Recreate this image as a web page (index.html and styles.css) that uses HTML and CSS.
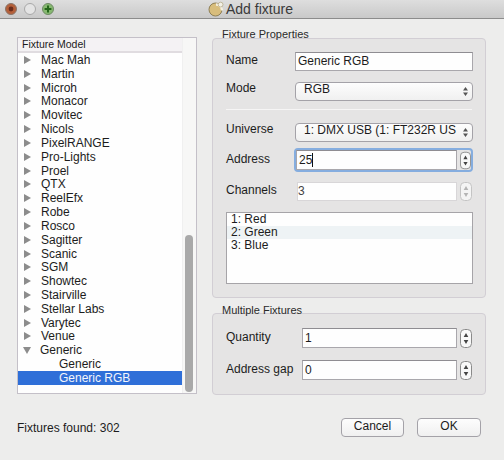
FILE: index.html
```html
<!DOCTYPE html>
<html>
<head>
<meta charset="utf-8">
<title>Add fixture</title>
<link rel="stylesheet" href="styles.css">
</head>
<body>
<div class="window">
  <header class="titlebar">
    <div class="lights">
      <svg class="light" viewBox="0 0 12 12"><circle cx="6" cy="6" r="5.5" fill="#b5603a" stroke="#8a7468"/><circle cx="6" cy="6" r="2.4" fill="#6b2d1c"/></svg>
      <svg class="light" viewBox="0 0 12 12"><circle cx="6" cy="6" r="5.5" fill="#e4e4e4" stroke="#a8a8a8"/></svg>
      <svg class="light" viewBox="0 0 12 12"><circle cx="6" cy="6" r="5.5" fill="#86b870" stroke="#6f8a66"/><path d="M6 2.600v6.800M2.600 6h6.800" stroke="#24661a" stroke-width="2"/></svg>
    </div>
    <div class="title">
      <svg class="title-icon" viewBox="0 0 16 16"><circle cx="7.500" cy="8.500" r="6.500" fill="#d8bd7c" stroke="#8f8056"/><path d="M8 3.500a6 6 0 0 1 6 6" fill="none" stroke="#f4efe0" stroke-width="2.400"/><circle cx="12.600" cy="3.600" r="2.400" fill="#f2f0e6" stroke="#a89a70" stroke-width=".6"/></svg>
      <span>Add fixture</span>
    </div>
  </header>

  <main class="main">
    <section class="tree">
      <div class="tree-head">Fixture Model</div>
      <div class="tree-body">
        <ul class="rows">
          <li class="row"><i class="tri"></i>Mac Mah</li>
          <li class="row"><i class="tri"></i>Martin</li>
          <li class="row"><i class="tri"></i>Microh</li>
          <li class="row"><i class="tri"></i>Monacor</li>
          <li class="row"><i class="tri"></i>Movitec</li>
          <li class="row"><i class="tri"></i>Nicols</li>
          <li class="row"><i class="tri"></i>PixelRANGE</li>
          <li class="row"><i class="tri"></i>Pro-Lights</li>
          <li class="row"><i class="tri"></i>Proel</li>
          <li class="row"><i class="tri"></i>QTX</li>
          <li class="row"><i class="tri"></i>ReelEfx</li>
          <li class="row"><i class="tri"></i>Robe</li>
          <li class="row"><i class="tri"></i>Rosco</li>
          <li class="row"><i class="tri"></i>Sagitter</li>
          <li class="row"><i class="tri"></i>Scanic</li>
          <li class="row"><i class="tri"></i>SGM</li>
          <li class="row"><i class="tri"></i>Showtec</li>
          <li class="row"><i class="tri"></i>Stairville</li>
          <li class="row"><i class="tri"></i>Stellar Labs</li>
          <li class="row"><i class="tri"></i>Varytec</li>
          <li class="row"><i class="tri"></i>Venue</li>
          <li class="row"><i class="tri open"></i>Generic</li>
          <li class="row child">Generic</li>
          <li class="row child selected">Generic RGB</li>
        </ul>
        <div class="scrollbar"><div class="thumb"></div></div>
      </div>
    </section>

    <div class="side">
      <section class="group props">
        <div class="legend">Fixture Properties</div>
        <div class="line name-line"><label class="label">Name</label><div class="input wide">Generic RGB</div></div>
        <div class="line mode-line"><label class="label up">Mode</label><div class="select"><span>RGB</span><svg class="updown" viewBox="0 0 7 11"><path d="M3.500 1 6 4.400H1zM3.500 10 1 6.600h5z" fill="#555"/></svg></div></div>
        <hr class="sep">
        <div class="line"><label class="label up">Universe</label><div class="select"><span>1: DMX USB (1: FT232R US</span><svg class="updown" viewBox="0 0 7 11"><path d="M3.500 1 6 4.400H1zM3.500 10 1 6.600h5z" fill="#555"/></svg></div></div>
        <div class="line addr-line"><label class="label addr-label">Address</label>
          <div class="focus-ring">
            <div class="input addr">25<span class="caret"></span></div>
            <svg class="spin" viewBox="0 0 12 19"><rect x=".5" y=".5" width="11" height="18" rx="4" fill="#f8f8f8" stroke="#8a8a8a"/><path d="M6 4 8.300 8H3.700zM6 15 3.700 11h4.600z" fill="#444"/></svg>
          </div>
        </div>
        <div class="line chan-line"><label class="label">Channels</label>
          <div class="input disabled">3</div>
          <svg class="spin" viewBox="0 0 12 19"><rect x=".5" y=".5" width="11" height="18" rx="4" fill="#f4f4f4" stroke="#c4c4c4"/><path d="M6 4 8.300 8H3.700zM6 15 3.700 11h4.600z" fill="#b4b4b4"/></svg>
        </div>
        <ul class="channels">
          <li class="chan">1: Red</li>
          <li class="chan alt">2: Green</li>
          <li class="chan">3: Blue</li>
        </ul>
      </section>

      <section class="group multi">
        <div class="legend">Multiple Fixtures</div>
        <div class="line qty-line"><label class="label short">Quantity</label>
          <div class="input num">1</div>
          <svg class="spin" viewBox="0 0 12 19"><rect x=".5" y=".5" width="11" height="18" rx="4" fill="#f8f8f8" stroke="#8a8a8a"/><path d="M6 4 8.300 8H3.700zM6 15 3.700 11h4.600z" fill="#444"/></svg>
        </div>
        <div class="line gap-line"><label class="label short">Address gap</label>
          <div class="input num">0</div>
          <svg class="spin" viewBox="0 0 12 19"><rect x=".5" y=".5" width="11" height="18" rx="4" fill="#f8f8f8" stroke="#8a8a8a"/><path d="M6 4 8.300 8H3.700zM6 15 3.700 11h4.600z" fill="#444"/></svg>
        </div>
      </section>
    </div>
  </main>

  <footer class="footer">
    <span class="found">Fixtures found: 302</span>
    <div class="buttons">
      <button class="btn">Cancel</button>
      <button class="btn">OK</button>
    </div>
  </footer>
</div>
</body>
</html>
```
FILE: styles.css
```css
* { box-sizing: border-box; }
html, body { margin: 0; padding: 0; }
body {
  width: 504px;
  height: 460px;
  overflow: hidden;
  background: #ededec;
  color: #1c1c1c;
  font: 12px "Liberation Sans", Arial, sans-serif;
}
.window { display: flex; flex-direction: column; height: 460px; }

.titlebar {
  height: 19px;
  flex: none;
  display: flex;
  align-items: center;
  background: linear-gradient(#dedede, #c9c9c9);
  border-bottom: 1px solid #8c8c8c;
  padding-left: 5px;
}
.lights { display: flex; gap: 6.5px; width: 203px; }
.light { width: 12px; height: 12px; display: block; }
.title { display: flex; align-items: center; gap: 2px; font-size: 14px; color: #3a3a3a; }
.title-icon { width: 16px; height: 16px; display: block; }

.main { display: flex; gap: 15px; padding: 18px 0 0 17px; flex: none; }

.tree {
  width: 180px;
  height: 357px;
  background: #fefefe;
  border: 1px solid #c4c0c8;
  display: flex;
  flex-direction: column;
}
.tree-head {
  height: 15px;
  flex: none;
  padding-left: 4px;
  font-size: 10.500px;
  line-height: 13px;
  background: #f4f2f4;
  border-bottom: 2px solid #e0dce0;
  margin-right: 14px;
}
.tree-body { flex: 1; display: flex; min-height: 0; }
.rows { list-style: none; margin: 0; padding: 0; width: 165px; }
.row {
  height: 13.83px;
  line-height: 14px;
  padding-left: 6px;
  display: flex;
  align-items: center;
}
.tri {
  width: 0;
  height: 0;
  flex: none;
  margin: 0 10px 0 0;
  border-left: 7px solid #8c8c8c;
  border-top: 4px solid transparent;
  border-bottom: 4px solid transparent;
}
.tri.open {
  border-left: 4px solid transparent;
  border-right: 4px solid transparent;
  border-top: 7px solid #8c8c8c;
  border-bottom: 0;
  margin: 0 9px 0 -1px;
}
.row.child { padding-left: 41px; }
.row.selected { background: #2f6fd8; color: #f4f6fb; }
.scrollbar { flex: 1; background: #f7f7f6; padding: 0 3px 0 2px; margin-top: -15px; border-left: 1px solid #f0f0f0; }
.thumb { height: 157px; margin-top: 197px; width: 8px; background: #a9a9a9; border-radius: 4px; }

.side { width: 274px; display: flex; flex-direction: column; gap: 15px; margin-top: 1px; }
.group {
  width: 274px;
  background: #e5e4e4;
  border: 1px solid #d2ced4;
  border-radius: 4px;
  padding-left: 13px;
  position: relative;
}
.legend {
  position: absolute;
  left: 9px;
  top: -11px;
  font-size: 11px;
  line-height: 12px;
  color: #2a2a2a;
}
.multi .legend { top: -10px; }
.props { height: 260px; }
.multi { height: 82px; }

.line { display: flex; align-items: center; width: 247px; }
.label { width: 69px; flex: none; line-height: 13px; padding-bottom: 2px; }
.label.up { padding-bottom: 6px; }
.label.short { width: 76px; }
.input {
  height: 19px;
  background: #fefefe;
  border: 1px solid #a9a7ac;
  border-top-color: #8f8d92;
  padding-left: 2px;
  line-height: 16px;
  font-size: 12px;
}
.wide { width: 178px; }
.select {
  width: 178px;
  height: 19px;
  background: linear-gradient(#fdfdfd, #f0f0f0);
  border: 1px solid #a4a2a8;
  border-radius: 4px;
  padding: 0 3px 0 8px;
  display: flex;
  align-items: center;
  justify-content: space-between;
  line-height: 13px;
}
.select span { padding-bottom: 4px; }
.updown { width: 7px; height: 11px; flex: none; }
.name-line { margin-top: 13px; }
.mode-line { margin-top: 11px; }
.sep { width: 246px; height: 1px; margin: 8px 0 13px; border: 0; background: #f6f5f5; }
.addr-line { margin-top: 6px; height: 24px; }
.addr-label { width: 68px; }
.focus-ring {
  width: 179px;
  height: 24px;
  border: 2px solid #85addf;
  border-radius: 4px;
  display: flex;
  align-items: center;
}
.addr {
  width: 161px;
  height: 20px;
  display: flex;
  align-items: center;
}
.caret { width: 1px; height: 14px; background: #111; }
.spin { width: 12px; height: 19px; margin-left: 3px; flex: none; display: block; }
.focus-ring .spin { width: 11px; }
.chan-line { margin-top: 10px; }
.disabled { width: 160px; margin-left: 2px; border-color: #d8d6d8; color: #444; padding-left: 0; }
.channels {
  list-style: none;
  width: 247px;
  height: 72px;
  margin: 11px 0 0;
  padding: 0;
  background: #fefefe;
  border: 1px solid #a6a4a8;
}
.chan { height: 13px; line-height: 13px; padding-left: 4px; }
.alt { background: #eef3f5; }
.num { width: 155px; height: 20px; padding-left: 2px; line-height: 18px; }
.qty-line { margin-top: 14px; }
.gap-line { margin-top: 12px; }

.footer {
  display: flex;
  align-items: center;
  justify-content: space-between;
  padding: 23px 23px 0 17px;
}
.found { line-height: 14px; }
.buttons { display: flex; gap: 13px; }
.btn {
  width: 63px;
  height: 19px;
  padding: 0 0 3px;
  background: linear-gradient(#fdfdfd, #f0f0f0);
  border: 1px solid #a4a2a8;
  border-radius: 4px;
  font: 12px "Liberation Sans", Arial, sans-serif;
  color: #1c1c1c;
}
.btn:last-child { width: 64px; }
```
